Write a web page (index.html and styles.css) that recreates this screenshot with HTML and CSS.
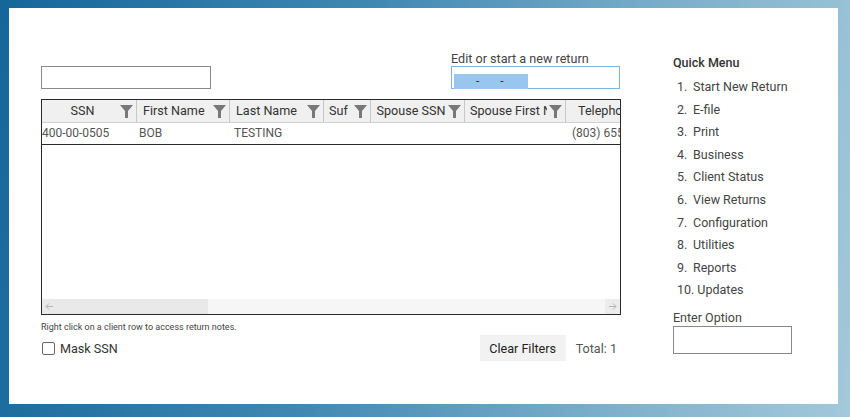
FILE: index.html
```html
<!DOCTYPE html>
<html>
<head>
<meta charset="utf-8">
<link rel="stylesheet" href="styles.css">
</head>
<body>
<div class="panel">
  <div class="main">
    <div class="top-row">
      <input class="search" type="text">
      <div class="edit-block">
        <div class="edit-label">Edit or start a new return</div>
        <div class="edit-input"><span class="sel">-&nbsp;&nbsp;&nbsp;&nbsp;&nbsp;&nbsp;&nbsp;-</span></div>
      </div>
    </div>
    <div class="grid">
      <div class="grid-head">
        <div class="hc c1"><span class="ht">SSN</span><svg class="fi" viewBox="0 0 13 13"><path d="M0 0H13L8 6V13H5V6Z"/></svg></div>
        <div class="hc c2"><span class="ht">First Name</span><svg class="fi" viewBox="0 0 13 13"><path d="M0 0H13L8 6V13H5V6Z"/></svg></div>
        <div class="hc c3"><span class="ht">Last Name</span><svg class="fi" viewBox="0 0 13 13"><path d="M0 0H13L8 6V13H5V6Z"/></svg></div>
        <div class="hc c4"><span class="ht">Suf</span><svg class="fi" viewBox="0 0 13 13"><path d="M0 0H13L8 6V13H5V6Z"/></svg></div>
        <div class="hc c5"><span class="ht">Spouse SSN</span><svg class="fi" viewBox="0 0 13 13"><path d="M0 0H13L8 6V13H5V6Z"/></svg></div>
        <div class="hc c6"><span class="ht">Spouse First Name</span><svg class="fi" viewBox="0 0 13 13"><path d="M0 0H13L8 6V13H5V6Z"/></svg></div>
        <div class="hc c7"><span class="ht">Telephone</span><svg class="fi" viewBox="0 0 13 13"><path d="M0 0H13L8 6V13H5V6Z"/></svg></div>
      </div>
      <div class="grid-row">
        <div class="dc c1 ssn">400-00-0505</div>
        <div class="dc c2">BOB</div>
        <div class="dc c3">TESTING</div>
        <div class="dc c4"></div>
        <div class="dc c5"></div>
        <div class="dc c6"></div>
        <div class="dc c7">(803) 655-1234</div>
      </div>
      <div class="grid-body"></div>
      <div class="hscroll">
        <div class="thumb"><svg class="arr" viewBox="0 0 9 9"><path d="M8 4.5H1M4 1.5L1 4.5L4 7.5"/></svg></div>
        <div class="arrow-r"><svg class="arr" viewBox="0 0 9 9"><path d="M1 4.5H8M5 1.5L8 4.5L5 7.5"/></svg></div>
      </div>
    </div>
    <div class="note">Right click on a client row to access return notes.</div>
    <div class="bottom-row">
      <label class="mask"><span class="cb"></span>Mask SSN</label>
      <div class="actions">
        <button class="btn">Clear Filters</button>
        <span class="total">Total: 1</span>
      </div>
    </div>
  </div>
  <div class="side">
    <div class="qm-title">Quick Menu</div>
    <ol class="qm-list">
      <li><span class="num">1.</span>Start New Return</li>
      <li><span class="num">2.</span>E-file</li>
      <li><span class="num">3.</span>Print</li>
      <li><span class="num">4.</span>Business</li>
      <li><span class="num">5.</span>Client Status</li>
      <li><span class="num">6.</span>View Returns</li>
      <li><span class="num">7.</span>Configuration</li>
      <li><span class="num">8.</span>Utilities</li>
      <li><span class="num">9.</span>Reports</li>
      <li class="wide"><span class="num">10.</span>Updates</li>
    </ol>
    <div class="opt-label">Enter Option</div>
    <input class="opt-input" type="text">
  </div>
</div>
</body>
</html>
```
FILE: styles.css
```css
* { box-sizing: border-box; }
html, body { margin: 0; padding: 0; }
body {
  width: 850px;
  height: 417px;
  overflow: hidden;
  font-family: Roboto, "Liberation Sans", Arial, sans-serif;
  background: linear-gradient(100deg, #15669a 0%, #3f88b3 40%, #7fb1cc 75%, #a3c9da 100%);
  padding: 8px 0 0 9px;
}
.panel {
  width: 829px;
  height: 396px;
  background: #fff;
  display: flex;
  padding: 44px 0 0 32px;
  gap: 52px;
}
.main { width: 580px; display: flex; flex-direction: column; }
.top-row { display: flex; justify-content: space-between; align-items: flex-end; }
.search {
  width: 170px; height: 23px; margin: 0;
  border: 1px solid #8a8a8a; border-radius: 0; padding: 0;
  background: #fff;
}
.edit-block { width: 169px; margin-right: 1px; }
.edit-label { font-size: 12.6px; line-height: 14px; color: #444; margin-bottom: 0; }
.edit-input {
  height: 23px; border: 1px solid #80b4e2;
  padding: 3px 0 0 2px;
}
.sel {
  display: inline-block; width: 74px; height: 15px;
  background: #99c6ef; color: #333;
  font-size: 12px; line-height: 14px; padding-left: 22px;
}
.grid {
  margin-top: 10px;
  width: 580px; height: 216px;
  border: 1px solid #2a2a2a;
  display: flex; flex-direction: column;
  overflow: hidden;
}
.grid-head {
  display: flex; height: 23px; background: #f0f0f0;
  border-bottom: 1px solid #d0d0d0; flex: none;
}
.hc {
  display: flex; align-items: center; flex: none;
  border-right: 1px solid #c8c8c8;
  padding: 0 3px 1px 5px; overflow: hidden;
  font-size: 12.6px; color: #333;
}
.ht { flex: 1; text-align: center; white-space: nowrap; overflow: hidden; }
.fi { width: 13px; height: 13px; fill: #787878; flex: none; margin-left: 2px; margin-top: 1px; }
.c1 { width: 95px; }
.c2 { width: 93px; }
.c3 { width: 94px; }
.c4 { width: 47px; }
.c5 { width: 94px; }
.c6 { width: 101px; }
.c7 { width: 90px; border-right: none; }
.c2 .ht, .c3 .ht { text-align: left; padding-left: 1px; }
.c4 .ht { text-align: left; padding-left: 0; }
.c7 .ht { text-align: left; padding-left: 7px; }
.grid-row {
  display: flex; height: 22px; flex: none;
  border-bottom: 1px solid #2a2a2a;
}
.dc {
  flex: none; font-size: 12px; color: #555; line-height: 20px;
  padding-left: 3px; white-space: nowrap; overflow: hidden;
}
.dc.c2 { padding-left: 2px; }
.dc.c3 { padding-left: 4px; }
.dc.ssn { padding-left: 0; }
.dc.c7 { padding-left: 6px; }
.grid-body { flex: 1; }
.hscroll {
  height: 15px; flex: none; background: #f6f6f6;
  display: flex; justify-content: space-between; align-items: center;
}
.thumb { width: 166px; height: 15px; background: #e9e9e9; padding: 3px 0 0 3px; }
.arrow-r { width: 15px; height: 15px; background: #ececec; padding: 3px 0 0 3px; }
.arr { display: block; width: 9px; height: 9px; fill: none; stroke: #b4b4b4; stroke-width: 1; }
.note { font-size: 9px; color: #444; margin-top: 6px; line-height: 12px; }
.bottom-row {
  display: flex; justify-content: space-between; align-items: center;
  height: 26px; margin-top: 2px;
}
.mask { display: flex; align-items: center; font-size: 12.6px; color: #333; padding-left: 1px; }
.cb {
  width: 13px; height: 13px; border: 1px solid #666; border-radius: 2px;
  margin-right: 5px; background: #fff;
}
.actions { display: flex; align-items: center; padding-right: 4px; }
.btn {
  width: 86px; height: 26px; border: none; background: #f2f2f2;
  font-family: Roboto, "Liberation Sans", Arial, sans-serif;
  font-size: 12.6px; color: #222; padding: 0; margin: 0;
}
.total { font-size: 12.6px; color: #555; margin-left: 10px; }
.side { width: 130px; }
.qm-title { font-size: 12.5px; font-weight: 500; color: #333; line-height: 22px; }
.qm-list {
  list-style: none; margin: 2px 0 0 0; padding: 0 0 0 4px;
}
.qm-list li { font-size: 12.5px; color: #444; line-height: 22.6px; white-space: nowrap; }
.num { display: inline-block; min-width: 16px; }
.wide .num { margin-right: 3px; }
.opt-label { font-size: 12.5px; color: #444; line-height: 14px; margin-top: 9px; }
.opt-input {
  display: block; width: 119px; height: 28px; margin: 1px 0 0 0;
  border: 1px solid #8a8a8a; padding: 0; background: #fff;
}
```
